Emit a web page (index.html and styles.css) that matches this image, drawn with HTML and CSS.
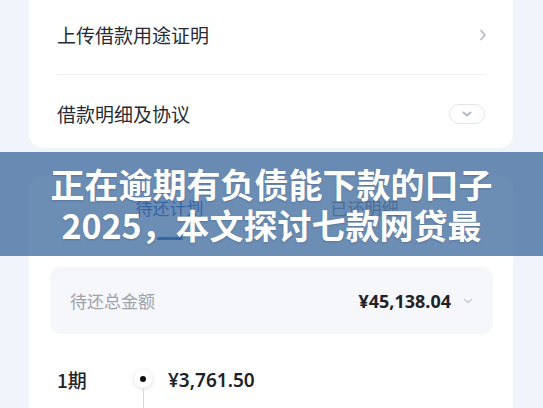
FILE: index.html
```html
<!DOCTYPE html>
<html lang="zh-CN">
<head>
<meta charset="utf-8">
<title>借款详情</title>
<link rel="stylesheet" href="styles.css">
</head>
<body>
<div class="page">
  <section class="card card-top">
    <div class="row row-first">
      <span class="row-label">上传借款用途证明</span>
      <svg class="chev-right" width="8" height="12" viewBox="0 0 8 12"><path d="M2 1.5 L6 6 L2 10.5" fill="none" stroke="#b9bdc7" stroke-width="1.8" stroke-linecap="round" stroke-linejoin="round"/></svg>
    </div>
    <div class="divider"></div>
    <div class="row row-second">
      <span class="row-label">借款明细及协议</span>
      <span class="pill"><svg width="12" height="8" viewBox="0 0 12 8"><path d="M2.5 2.5 L6 5.5 L9.5 2.5" fill="none" stroke="#b4b9c4" stroke-width="2" stroke-linecap="round" stroke-linejoin="round"/></svg></span>
    </div>
  </section>

  <section class="card card-plan">
    <div class="tabs">
      <div class="tab tab-active">待还计划<span class="tab-bar"></span></div>
      <div class="tab">已还明细</div>
    </div>
    <div class="total">
      <span class="total-label">待还总金额</span>
      <span class="total-right">
        <span class="total-amount">¥45,138.04</span>
        <svg width="10" height="6" viewBox="0 0 10 6"><path d="M1.5 1.5 L5 4.5 L8.5 1.5" fill="none" stroke="#c9cdd5" stroke-width="1.5" stroke-linecap="round" stroke-linejoin="round"/></svg>
      </span>
    </div>
    <div class="period">
      <div class="period-name">1期</div>
      <div class="timeline"><span class="dot"><i></i></span><span class="line"></span></div>
      <div class="period-amount">¥3,761.50</div>
      <div class="period-date">2024/03/20</div>
      <div class="period-detail">本金 ¥3,500.00　利息 ¥261.50</div>
    </div>
  </section>

  <div class="banner">
    <div>正在逾期有负债能下款的口子</div>
    <div>2025，本文探讨七款网贷最</div>
  </div>
</div>
</body>
</html>
```

FILE: styles.css
```css
* { box-sizing: border-box; }
html, body {
  margin: 0;
  padding: 0;
  width: 543px;
  height: 408px;
  overflow: hidden;
  background: #f1f4fa;
  font-family: "Noto Sans CJK SC", "Noto Sans", sans-serif;
}
.page {
  position: relative;
  padding: 0 30px 0 29px;
  height: 408px;
}
.card {
  background: #ffffff;
}
.card-top {
  border-radius: 0 0 14px 14px;
  padding: 0 28px;
}
.row {
  display: flex;
  align-items: center;
  justify-content: space-between;
}
.row-first {
  height: 74px;
  padding-bottom: 4px;
}
.row-second {
  height: 73px;
  padding-top: 4px;
}
.row-label {
  font-size: 19px;
  line-height: 26px;
  color: #262b36;
}
.chev-right {
  margin-right: -2px;
}
.divider {
  height: 1px;
  background: #eceef2;
}
.pill {
  width: 36px;
  height: 20px;
  border: 1px solid #e3e5eb;
  border-radius: 10px;
  display: flex;
  align-items: center;
  justify-content: center;
}
.card-plan {
  margin-top: 28px;
  border-radius: 14px;
  padding: 0 20px 0 21px;
  height: 300px;
}
.tabs {
  display: grid;
  grid-template-columns: 1fr 1fr;
  padding: 20px 31px 0 22px;
}
.tab {
  display: flex;
  flex-direction: column;
  align-items: center;
  font-size: 17px;
  line-height: 24px;
  color: #7f848e;
}
.tab-active {
  color: #2d62c0;
}
.tab-bar {
  display: block;
  width: 26px;
  height: 3px;
  border-radius: 2px;
  background: #2c62c4;
  margin-top: 17px;
}
.total {
  margin-top: 27px;
  height: 67px;
  border-radius: 10px;
  background: #f6f7fa;
  display: flex;
  align-items: center;
  justify-content: space-between;
  padding: 0 20px 0 20px;
}
.total-label {
  font-size: 17px;
  color: #9ea2ab;
}
.total-right {
  display: flex;
  align-items: center;
  gap: 12px;
}
.total-amount {
  font-size: 18px;
  font-weight: 700;
  color: #1f2329;
  font-family: "Noto Sans", "Noto Sans CJK SC", sans-serif;
}
.period {
  margin-top: 33px;
  padding-left: 7px;
  display: grid;
  grid-template-columns: 61px 18px 1fr;
  column-gap: 16px;
  row-gap: 8px;
}
.period-name {
  font-size: 19px;
  line-height: 26px;
  font-weight: 500;
  color: #1f2329;
}
.timeline {
  grid-row: 1 / span 2;
  grid-column: 2;
  display: flex;
  flex-direction: column;
  align-items: center;
  padding-top: 3px;
}
.dot {
  width: 18px;
  height: 18px;
  border-radius: 50%;
  background: #fff;
  box-shadow: 0 1px 5px rgba(40, 60, 100, 0.18);
  display: flex;
  align-items: center;
  justify-content: center;
}
.dot i {
  width: 6px;
  height: 6px;
  border-radius: 50%;
  background: #111;
}
.line {
  width: 1px;
  height: 40px;
  background: #d6d9e0;
}
.period-amount {
  grid-column: 3;
  font-size: 19px;
  line-height: 26px;
  font-weight: 600;
  color: #1f2329;
  font-family: "Noto Sans", "Noto Sans CJK SC", sans-serif;
}
.period-date {
  grid-column: 1;
  grid-row: 2;
  font-size: 13px;
  color: #a3a7b0;
}
.period-detail {
  grid-column: 3;
  grid-row: 2;
  font-size: 13px;
  color: #a3a7b0;
}
.banner {
  position: absolute;
  left: 0;
  top: 152px;
  width: 543px;
  height: 104px;
  background: rgba(59, 103, 155, 0.75);
  display: flex;
  flex-direction: column;
  justify-content: center;
  align-items: center;
  color: #ffffff;
  font-size: 34px;
  font-weight: 700;
  line-height: 41px;
  text-shadow: 0 1px 2px rgba(30, 50, 80, 0.25);
  white-space: nowrap;
}
```
